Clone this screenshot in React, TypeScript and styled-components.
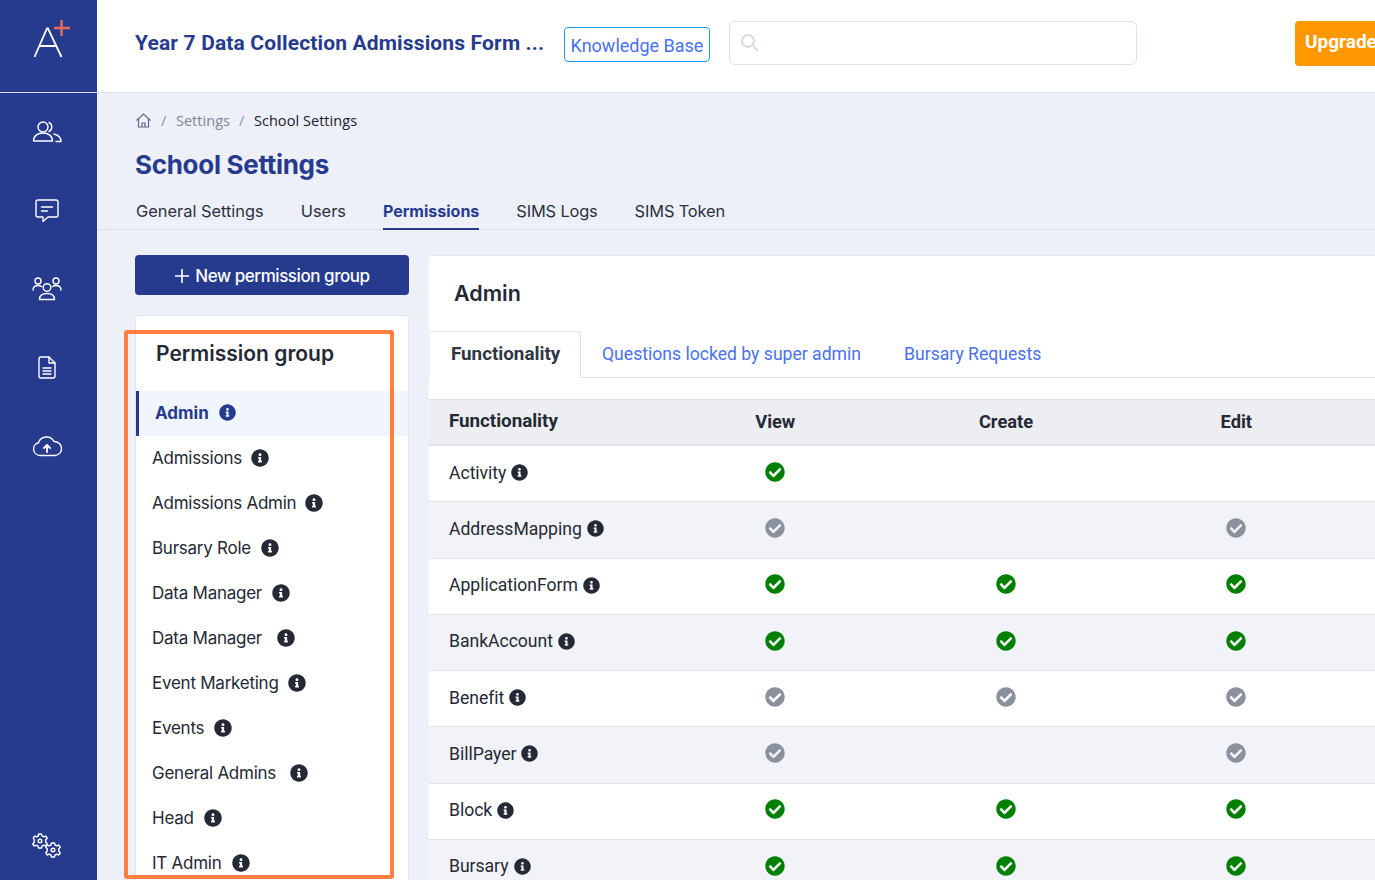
import React from "react";
import styled, { createGlobalStyle } from "styled-components";
import { FaInfoCircle, FaCheckCircle } from "react-icons/fa";

const Global = createGlobalStyle`
  html, body { margin: 0; padding: 0; height: 100%; overflow: hidden; background: #edf0f8; }
  body { font-family: "Inter", "Liberation Sans", sans-serif; color: #242935; }
  * { box-sizing: border-box; }
`;

const NAVY = "#263b8e";
const Page = styled.div`display: flex; width: 1375px; height: 880px; overflow: hidden; position: relative;`;
const Sidebar = styled.aside`width: 97px; flex: none; background: ${NAVY}; display: flex; flex-direction: column; align-items: center; height: 880px;`;
const LogoBox = styled.div`width: 100%; height: 93px; border-bottom: 1px solid #d9dcec; display: flex; align-items: flex-start; justify-content: center; padding-top: 18px;`;
const NavIcons = styled.nav`display: flex; flex-direction: column; align-items: center; gap: 50.5px; padding-top: 24px; flex: 1; margin-right: 3px;`;
const NavIcon = styled.svg`width: 30px; height: 28px; display: block; fill: none; stroke: #fff; stroke-width: 1.4; stroke-linecap: round; stroke-linejoin: round;`;
const GearSlot = styled.div`padding-bottom: 21px; margin-right: 3px;`;

const Main = styled.main`flex: 1; min-width: 0; display: flex; flex-direction: column;`;
const Header = styled.header`height: 93px; flex: none; background: #fff; border-bottom: 1px solid #dfe1e8; display: flex; align-items: center; padding: 0 0 6px 38px; white-space: nowrap;`;
const FormTitle = styled.div`font-family: "Roboto", sans-serif; font-weight: 700; font-size: 21px; letter-spacing: 0.15px; color: ${NAVY}; width: 411px; flex: none; overflow: hidden;`;
const Knowledge = styled.a`height: 35px; width: 146px; flex: none; margin: 3px 0 0 18px; padding-top: 2px; border: 1px solid #1e9be8; border-radius: 4px; color: #4a70f0; font-family: "Roboto", sans-serif; font-size: 18px; display: flex; align-items: center; justify-content: center;`;
const Search = styled.div`width: 408px; height: 44px; flex: none; margin-left: 19px; border: 1px solid #dbe2ec; border-radius: 6px; padding: 11px 0 0 10px;`;
const Upgrade = styled.button`margin-left: 158px; width: 120px; height: 45px; border: 0; border-radius: 4px 0 0 4px; background: #ff9800; color: #fff; font-family: "Roboto", sans-serif; font-weight: 700; font-size: 19px; text-align: left; padding: 0 0 3px 10px; flex: none;`;

const Crumbs = styled.div`display: flex; align-items: center; height: 20px; margin: 17px 0 0 38px; font-size: 14.5px; font-family: "Open Sans", sans-serif; letter-spacing: 0.05px;`;
const CrumbSep = styled.span`color: #8a92a6; margin: 0 9.5px 0 9px;`;
const CrumbLink = styled.span`color: #7c8598;`;
const CrumbNow = styled.span`color: #1c2030;`;
const PageTitle = styled.h1`margin: 19px 0 0 38px; font-size: 26px; line-height: 32px; font-weight: 700; color: ${NAVY}; letter-spacing: -0.3px;`;
const TopTabs = styled.div`display: flex; gap: 37px; height: 35px; margin-top: 14px; padding-left: 39px; border-bottom: 1px solid #dde0e8;`;
const TopTab = styled.div<{ $on?: boolean; $tight?: boolean }>`font-size: ${p => (p.$on ? "16px" : "16.4px")}; letter-spacing: ${p => (p.$tight ? "-0.15px" : "0")}; height: 35px; line-height: 32px; color: ${p => (p.$on ? NAVY : "#2b303c")}; font-weight: ${p => (p.$on ? 700 : 400)}; border-bottom: ${p => (p.$on ? `2px solid ${NAVY}` : "none")};`;

const Columns = styled.div`display: flex; gap: 20px; padding: 25px 0 0 38px; flex: 1; min-height: 0;`;
const Left = styled.div`width: 274px; flex: none; display: flex; flex-direction: column; gap: 20px;`;
const NewBtn = styled.button`height: 40px; border: 0; border-radius: 4px; background: ${NAVY}; color: #fff; font-family: inherit; font-size: 17px; font-weight: 500; letter-spacing: -0.45px; display: flex; align-items: center; justify-content: center; gap: 5px; padding: 1px 0 0;`;
const GroupCard = styled.div`flex: 1; background: #fff; border: 1px solid #e0e4ec; border-bottom: 0; border-radius: 4px 4px 0 0; overflow: hidden;`;
const GroupTitle = styled.h2`margin: 0; padding: 24px 0 0 20px; height: 75px; font-size: 21px; line-height: 28px; font-weight: 600; color: #242935;`;
const GroupRow = styled.div<{ $on?: boolean }>`height: 45px; display: flex; align-items: center; font-size: 17px; padding: 0 0 2px 16px; background: ${p => (p.$on ? "#f1f5fe" : "transparent")}; border-left: ${p => (p.$on ? `3px solid ${NAVY}` : "0")}; color: ${p => (p.$on ? NAVY : "#242935")}; font-weight: ${p => (p.$on ? 700 : 400)}; letter-spacing: ${p => (p.$on ? "0" : "-0.25px")}; svg { color: ${p => (p.$on ? NAVY : "#242935")}; }`;
const InfoGap = styled.span<{ $gap: number }>`display: inline-flex; margin-left: ${p => p.$gap}px;`;

const Panel = styled.section`flex: 1; background: #fff; min-width: 0; border-top: 1px solid #e3e6ee; border-radius: 4px 0 0 0; overflow: hidden; margin-right: -40px;`;
const PanelTitle = styled.h2`margin: 0; height: 75px; padding: 22px 0 0 25px; font-size: 21.5px; line-height: 30px; font-weight: 600; color: #242935;`;
const PanelTabs = styled.div`display: flex; height: 47px; border-bottom: 1px solid #dde0e6; font-family: "Roboto", sans-serif; font-size: 17.6px;`;
const PanelTab = styled.div<{ $on?: boolean }>`height: 47px; line-height: 47px; padding: 0 21px; margin-right: ${p => (p.$on ? "0" : "1px")}; color: ${p => (p.$on ? "#2f3542" : "#4a70f0")}; font-weight: ${p => (p.$on ? 700 : 400)}; ${p => p.$on && `font-size: 18.8px; line-height: 45px; padding: 0 20px 0 21px; width: 152px; border: 1px solid #dde0e6; border-bottom: 1px solid #fff; border-left: 1px solid #eef0f4; border-radius: 4px 4px 0 0; background: #fff;`}`;
const Table = styled.div`margin-top: 21px; font-family: "Roboto", sans-serif;`;
const Row = styled.div<{ $head?: boolean; $alt?: boolean }>`display: grid; grid-template-columns: 231px 230.5px 231px 229.5px; align-items: center; height: ${p => (p.$head ? "47px" : "56.25px")}; background: ${p => (p.$head ? "#edeef2" : p.$alt ? "#f2f3f8" : "#fff")}; border-bottom: 1px solid #e0e2e8; ${p => p.$head && "border-top: 1px solid #dfe1e7; border-bottom: 2px solid #dfe1e7; font-weight: 700;"} font-size: ${p => (p.$head ? "18.8px" : "17.6px")};`;
const NameCell = styled.div`padding-left: 20px; display: flex; align-items: center; gap: 5px; color: #242935; letter-spacing: -0.03px; margin-top: -2px;`;
const MarkCell = styled.div`display: flex; justify-content: center; margin-top: -3.4px;`;
const HeadCell = styled.div`text-align: center; color: #242935; font-size: 18.3px; margin-top: -2px;`;
const Annotation = styled.div`position: absolute; left: 124px; top: 330px; width: 270px; height: 549px; border: 4px solid #ff7f42; border-radius: 3px; pointer-events: none;`;

const groups: [string, number][] = [["Admissions", 9], ["Admissions Admin", 9], ["Bursary Role", 10], ["Data Manager", 10], ["Data Manager", 15], ["Event Marketing", 9], ["Events", 10], ["General Admins", 14], ["Head", 10], ["IT Admin", 10]];
type M = "g" | "x" | "";
const rows: [string, M, M, M][] = [
  ["Activity", "g", "", ""], ["AddressMapping", "x", "", "x"], ["ApplicationForm", "g", "g", "g"], ["BankAccount", "g", "g", "g"],
  ["Benefit", "x", "x", "x"], ["BillPayer", "x", "", "x"], ["Block", "g", "g", "g"], ["Bursary", "g", "g", "g"],
];
const Mark = ({ m }: { m: M }) => <MarkCell>{m && <FaCheckCircle size={20} color={m === "g" ? "#008000" : "#8a919c"} />}</MarkCell>;

const Logo = () => (
  <svg width="44" height="44" viewBox="0 0 44 44" fill="none">
    <path d="M7.500 39 L20 10.500 L21 10.500 L34.500 39 M12 28 H30" stroke="#fff" strokeWidth="1.800" />
    <path d="M34.500 2 V18 M27 10 H43" stroke="#e8685a" strokeWidth="2.400" />
  </svg>
);

export default function App() {
  return (
    <Page>
      <Global />
      <Sidebar>
        <LogoBox><Logo /></LogoBox>
        <NavIcons>
          <NavIcon viewBox="0 0 30 28"><circle cx="11" cy="10" r="5" /><path d="M1.500 24c0-5 4-8 9.500-8s9.500 3 9.500 8z" /><path d="M17 5.500a5 5 0 0 1 0 9M22 17c4 1 7 3.500 7 7.500h-5" /></NavIcon>
          <NavIcon viewBox="0 0 30 28"><path d="M6 4h18a2 2 0 0 1 2 2v13a2 2 0 0 1-2 2H16l-5 4.500V21H6a2 2 0 0 1-2-2V6a2 2 0 0 1 2-2z" /><path d="M9.500 11h11M9.500 15h6" /></NavIcon>
          <NavIcon viewBox="0 0 30 28"><circle cx="15" cy="13.500" r="3.800" /><path d="M7.500 25.500c0-4 3-6 7.500-6s7.500 2 7.500 6z" /><circle cx="6" cy="7" r="3" /><circle cx="24" cy="7" r="3" /><path d="M1 16c0-3 2-4.500 5-4.500 1.500 0 2.500.3 3.500 1M29 16c0-3-2-4.500-5-4.500-1.500 0-2.500.3-3.500 1" /></NavIcon>
          <NavIcon viewBox="0 0 30 28"><path d="M9 4h8l6 6v13a2 2 0 0 1-2 2H9a2 2 0 0 1-2-2V6a2 2 0 0 1 2-2z" /><path d="M17 4v6h6M11 15h8M11 18h8M11 21h8" /></NavIcon>
          <NavIcon viewBox="0 0 30 28"><path d="M8 24.500a6.500 6.500 0 0 1-1.500-12.800A8.500 8.500 0 0 1 22 10.500a7 7 0 0 1 1 14z" /><path d="M15 21v-7M12 17l3-3 3 3" strokeWidth="1.800" /></NavIcon>
        </NavIcons>
        <GearSlot>
          <NavIcon viewBox="0 0 30 28">
            <circle cx="8" cy="10" r="1.800" /><path d="M6.500 3h3l.6 2 1.900.9 1.900-.9 1.300 2.200-1.400 1.500v2.600l1.400 1.500-1.300 2.200-1.900-.9-1.900.9-.6 2h-3l-.6-2-1.900-.9-1.900.9-1.300-2.200 1.400-1.500V8.700L1.300 7.200l1.300-2.200 1.900.9 1.900-.9z" />
            <circle cx="21" cy="19" r="1.800" /><path d="M19.500 12h3l.6 2 1.900.9 1.900-.9 1.300 2.200-1.400 1.500v2.600l1.400 1.500-1.300 2.200-1.900-.9-1.900.9-.6 2h-3l-.6-2-1.900-.9-1.900.9-1.300-2.200 1.400-1.500v-2.600l-1.400-1.500 1.300-2.200 1.900.9 1.900-.9z" />
          </NavIcon>
        </GearSlot>
      </Sidebar>
      <Main>
        <Header>
          <FormTitle>Year 7 Data Collection Admissions Form ...</FormTitle>
          <Knowledge>Knowledge Base</Knowledge>
          <Search>
            <svg width="20" height="20" viewBox="0 0 20 20" fill="none" stroke="#d4dae2" strokeWidth="2"><circle cx="8" cy="8" r="6" /><path d="M13 13l5 5" /></svg>
          </Search>
          <Upgrade>Upgrade</Upgrade>
        </Header>
        <Crumbs>
          <svg width="17" height="17" viewBox="0 0 17 17" fill="none" stroke="#5f6b85" strokeWidth="1.200"><path d="M1.500 8.500L8.500 2l7 6.500M3.500 7v8h10V7M7 15v-4h3v4" /></svg>
          <CrumbSep>/</CrumbSep><CrumbLink>Settings</CrumbLink><CrumbSep>/</CrumbSep><CrumbNow>School Settings</CrumbNow>
        </Crumbs>
        <PageTitle>School Settings</PageTitle>
        <TopTabs>
          <TopTab>General Settings</TopTab><TopTab>Users</TopTab><TopTab $on>Permissions</TopTab><TopTab $tight>SIMS Logs</TopTab><TopTab $tight>SIMS Token</TopTab>
        </TopTabs>
        <Columns>
          <Left>
            <NewBtn><svg width="16" height="16" viewBox="0 0 16 16" stroke="#fff" strokeWidth="1.600"><path d="M8 1v14M1 8h14" /></svg>New permission group</NewBtn>
            <GroupCard>
              <GroupTitle>Permission group</GroupTitle>
              <GroupRow $on>Admin<InfoGap $gap={10}><FaInfoCircle size={17} /></InfoGap></GroupRow>
              {groups.map(([n, g], i) => <GroupRow key={i}>{n}<InfoGap $gap={g}><FaInfoCircle size={18} /></InfoGap></GroupRow>)}
            </GroupCard>
          </Left>
          <Panel>
            <PanelTitle>Admin</PanelTitle>
            <PanelTabs>
              <PanelTab $on>Functionality</PanelTab>
              <PanelTab>Questions locked by super admin</PanelTab>
              <PanelTab>Bursary Requests</PanelTab>
            </PanelTabs>
            <Table>
              <Row $head><NameCell>Functionality</NameCell><HeadCell>View</HeadCell><HeadCell>Create</HeadCell><HeadCell>Edit</HeadCell></Row>
              {rows.map(([n, a, b, c], i) => (
                <Row key={n} $alt={i % 2 === 1}><NameCell>{n}<FaInfoCircle size={17} color="#242935" /></NameCell><Mark m={a} /><Mark m={b} /><Mark m={c} /></Row>
              ))}
            </Table>
          </Panel>
        </Columns>
      </Main>
      <Annotation />
    </Page>
  );
}
